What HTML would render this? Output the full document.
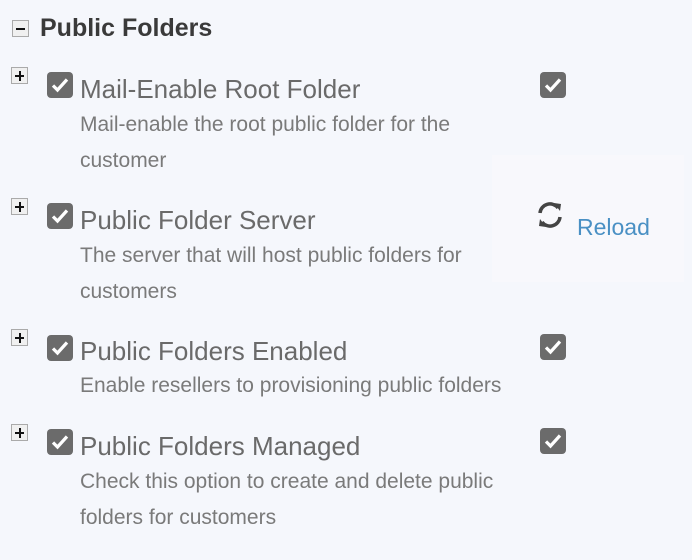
<!DOCTYPE html>
<html><head><style>
body{margin:0;width:692px;height:560px;background:#f5f7fc;font-family:"Liberation Sans",sans-serif;position:relative;overflow:hidden}
.a{position:absolute}
.pb{position:absolute;width:15px;height:15px;border:1px solid #aaa;background:#f0f0f0;box-sizing:content-box}
.pb:before{content:"";position:absolute;left:3px;top:7px;width:9px;height:2px;background:#111}
.pb.p:after{content:"";position:absolute;left:7px;top:3px;width:2px;height:10px;background:#111}
.cb{position:absolute;width:26px;height:26px;background:#6b6b6b;border-radius:4px}
.cb svg{position:absolute;left:3px;top:3px}
.t{position:absolute;left:80px;font-size:26px;color:#6a6a6a;white-space:nowrap;line-height:30px}
.d{position:absolute;left:80px;font-size:21px;color:#7a7a7a;line-height:36px;white-space:nowrap}
</style></head><body>
<div class="pb" style="left:12px;top:20px"></div>
<div class="a" style="left:40px;top:12px;font-size:25px;font-weight:bold;color:#3a3a3a;line-height:32px">Public Folders</div>

<div class="a" style="left:492px;top:155px;width:192px;height:127px;background:#f8f8fc"></div>

<div class="pb p" style="left:11px;top:67px"></div>
<div class="cb" style="left:47px;top:72px"><svg width="20" height="20" viewBox="0 0 20 20"><path d="M3 10.5l4.5 4.5L17 4.5" stroke="#fff" stroke-width="3.2" fill="none"/></svg></div>
<div class="t" style="top:74px">Mail-Enable Root Folder</div>
<div class="d" style="top:107px">Mail-enable the root public folder for the<br>customer</div>
<div class="cb" style="left:540px;top:72px"><svg width="20" height="20" viewBox="0 0 20 20"><path d="M3 10.5l4.5 4.5L17 4.5" stroke="#fff" stroke-width="3.2" fill="none"/></svg></div>

<div class="pb p" style="left:11px;top:198px"></div>
<div class="cb" style="left:47px;top:203px"><svg width="20" height="20" viewBox="0 0 20 20"><path d="M3 10.5l4.5 4.5L17 4.5" stroke="#fff" stroke-width="3.2" fill="none"/></svg></div>
<div class="t" style="top:205px">Public Folder Server</div>
<div class="d" style="top:238px">The server that will host public folders for<br>customers</div>
<svg class="a" style="left:534px;top:199px" width="32" height="32" viewBox="0 0 32 32"><path d="M6 14A10 10 0 0 1 24 9" stroke="#444" stroke-width="3.5" fill="none"/><path d="M26 18A10 10 0 0 1 8 23" stroke="#444" stroke-width="3.5" fill="none"/><path d="M20 4l7 1-1 7z" fill="#444"/><path d="M12 28l-7-1 1-7z" fill="#444"/></svg>
<div class="a" style="left:577px;top:213px;font-size:23px;color:#4a90c4;line-height:28px">Reload</div>

<div class="pb p" style="left:11px;top:329px"></div>
<div class="cb" style="left:47px;top:335px"><svg width="20" height="20" viewBox="0 0 20 20"><path d="M3 10.5l4.5 4.5L17 4.5" stroke="#fff" stroke-width="3.2" fill="none"/></svg></div>
<div class="t" style="top:336px">Public Folders Enabled</div>
<div class="d" style="top:368px">Enable resellers to provisioning public folders</div>
<div class="cb" style="left:540px;top:334px"><svg width="20" height="20" viewBox="0 0 20 20"><path d="M3 10.5l4.5 4.5L17 4.5" stroke="#fff" stroke-width="3.2" fill="none"/></svg></div>

<div class="pb p" style="left:11px;top:424px"></div>
<div class="cb" style="left:47px;top:429px"><svg width="20" height="20" viewBox="0 0 20 20"><path d="M3 10.5l4.5 4.5L17 4.5" stroke="#fff" stroke-width="3.2" fill="none"/></svg></div>
<div class="t" style="top:431px">Public Folders Managed</div>
<div class="d" style="top:464px">Check this option to create and delete public<br>folders for customers</div>
<div class="cb" style="left:540px;top:428px"><svg width="20" height="20" viewBox="0 0 20 20"><path d="M3 10.5l4.5 4.5L17 4.5" stroke="#fff" stroke-width="3.2" fill="none"/></svg></div>
</body></html>
